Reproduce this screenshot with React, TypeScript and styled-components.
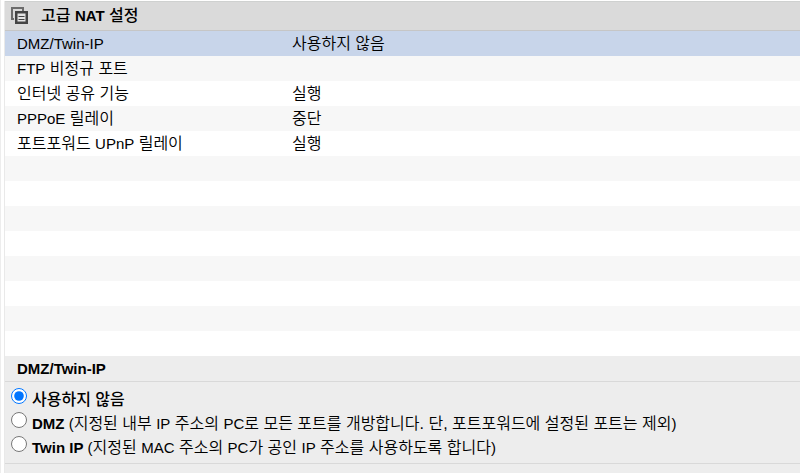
import React, { useState } from "react";
import styled, { createGlobalStyle } from "styled-components";

const GlobalStyle = createGlobalStyle`
  * { box-sizing: border-box; }
  html, body { margin: 0; background: #fff; }
  body {
    font-family: "Liberation Sans", "Noto Sans CJK KR", sans-serif;
    font-size: 15px;
    color: #000;
    overflow-x: hidden;
  }
`;

const Page = styled.div`
  min-height: 100vh;
  display: flex;
  border-left: 1px solid #ededed;
  padding: 1px 0 0 3px;
`;

const Panel = styled.main`
  flex: 1;
  min-width: 0;
  display: flex;
  flex-direction: column;
  border-left: 1px solid #e9e9e9;
`;

const Header = styled.header`
  height: 30px;
  display: flex;
  align-items: center;
  gap: 12px;
  padding-left: 5px;
  background: #dadada;
  border-top: 1px solid #cfd1d0;
  border-bottom: 1px solid #c6c6c6;
`;

const Title = styled.h1`
  margin: 0;
  font-size: 15px;
  line-height: 24px;
  font-weight: 700;
`;

const Hangul = styled.span`
  font-size: 16px;
  font-weight: 350;
`;

const HangulMedium = styled(Hangul)`
  font-weight: 500;
`;

const SettingsTable = styled.table`
  width: 100%;
  border-collapse: collapse;
  table-layout: fixed;
`;

const Row = styled.tr<{ $selected: boolean }>`
  height: 25px;
  background: ${(p) => (p.$selected ? "#c8d5ea" : "#fff")};
  &:nth-child(even) { background: #f7f7f7; }
`;

const Cell = styled.td`
  padding: 0 0 0 12px;
  line-height: 25px;
  white-space: nowrap;
  &:first-child { width: 275px; }
`;

const Detail = styled.section`
  flex: 1;
  background: #ededed;
`;

const DetailTitle = styled.h2`
  margin: 0;
  height: 26px;
  padding-left: 12px;
  font-size: 15px;
  line-height: 25px;
  border-bottom: 1px solid #d9d9d9;
`;

const Options = styled.div`
  display: flex;
  flex-direction: column;
  padding: 5px 0 4px 6px;
  border-bottom: 1px solid #d9d9d9;
`;

const Option = styled.label`
  display: flex;
  align-items: flex-start;
  gap: 5px;
  height: 24px;
  line-height: 24px;
  white-space: nowrap;
`;

const Radio = styled.input`
  width: 16px;
  height: 16px;
  margin: 1px 0 0;
  flex: none;
`;

const OptionText = styled.span`
  padding-top: 1px;
`;

function Mixed({ text, medium = false }: { text: string; medium?: boolean }) {
  const Run = medium ? HangulMedium : Hangul;
  return (
    <>
      {text.split(/(\s*[가-힣][가-힣\s.,]*)/).map((part, i) =>
        i % 2 ? <Run key={i}>{part}</Run> : part
      )}
    </>
  );
}

function WindowsIcon() {
  return (
    <svg width="19" height="20" viewBox="0 0 19 20" fill="none" aria-hidden="true">
      <rect x="2" y="2" width="11" height="11" stroke="#6c6c6c" strokeWidth="2" />
      <rect x="4" y="5" width="15" height="15" fill="#dadada" />
      <rect x="6.25" y="6.25" width="10.5" height="10.5" fill="#e4e4e4" stroke="#444" strokeWidth="2.5" />
      <path d="M8.5 10.5h6M8.5 13.5h6" stroke="#444" strokeWidth="1.2" />
    </svg>
  );
}

const settings: [string, string][] = [
  ["DMZ/Twin-IP", "사용하지 않음"],
  ["FTP 비정규 포트", ""],
  ["인터넷 공유 기능", "실행"],
  ["PPPoE 릴레이", "중단"],
  ["포트포워드 UPnP 릴레이", "실행"],
];
const EMPTY_ROWS = 8;

const options = [
  { id: "off", name: "사용하지 않음", note: "" },
  {
    id: "dmz",
    name: "DMZ",
    note: " (지정된 내부 IP 주소의 PC로 모든 포트를 개방합니다. 단, 포트포워드에 설정된 포트는 제외)",
  },
  {
    id: "twin",
    name: "Twin IP",
    note: " (지정된 MAC 주소의 PC가 공인 IP 주소를 사용하도록 합니다)",
  },
];

export default function App() {
  const [mode, setMode] = useState("off");
  return (
    <>
      <GlobalStyle />
      <Page>
        <Panel>
          <Header>
            <WindowsIcon />
            <Title><Mixed text="고급 NAT 설정" medium /></Title>
          </Header>
          <SettingsTable>
            <tbody>
              {settings.map(([name, value], i) => (
                <Row key={name} $selected={i === 0}>
                  <Cell><Mixed text={name} /></Cell>
                  <Cell><Mixed text={value} /></Cell>
                </Row>
              ))}
              {Array.from({ length: EMPTY_ROWS }, (_, i) => (
                <Row key={i} $selected={false}>
                  <Cell />
                  <Cell />
                </Row>
              ))}
            </tbody>
          </SettingsTable>
          <Detail>
            <DetailTitle>DMZ/Twin-IP</DetailTitle>
            <Options role="radiogroup" aria-label="DMZ/Twin-IP">
              {options.map((o) => (
                <Option key={o.id}>
                  <Radio
                    type="radio"
                    name="mode"
                    value={o.id}
                    checked={mode === o.id}
                    onChange={() => setMode(o.id)}
                  />
                  <OptionText>
                    <b><Mixed text={o.name} medium /></b>
                    <Mixed text={o.note} />
                  </OptionText>
                </Option>
              ))}
            </Options>
          </Detail>
        </Panel>
      </Page>
    </>
  );
}
